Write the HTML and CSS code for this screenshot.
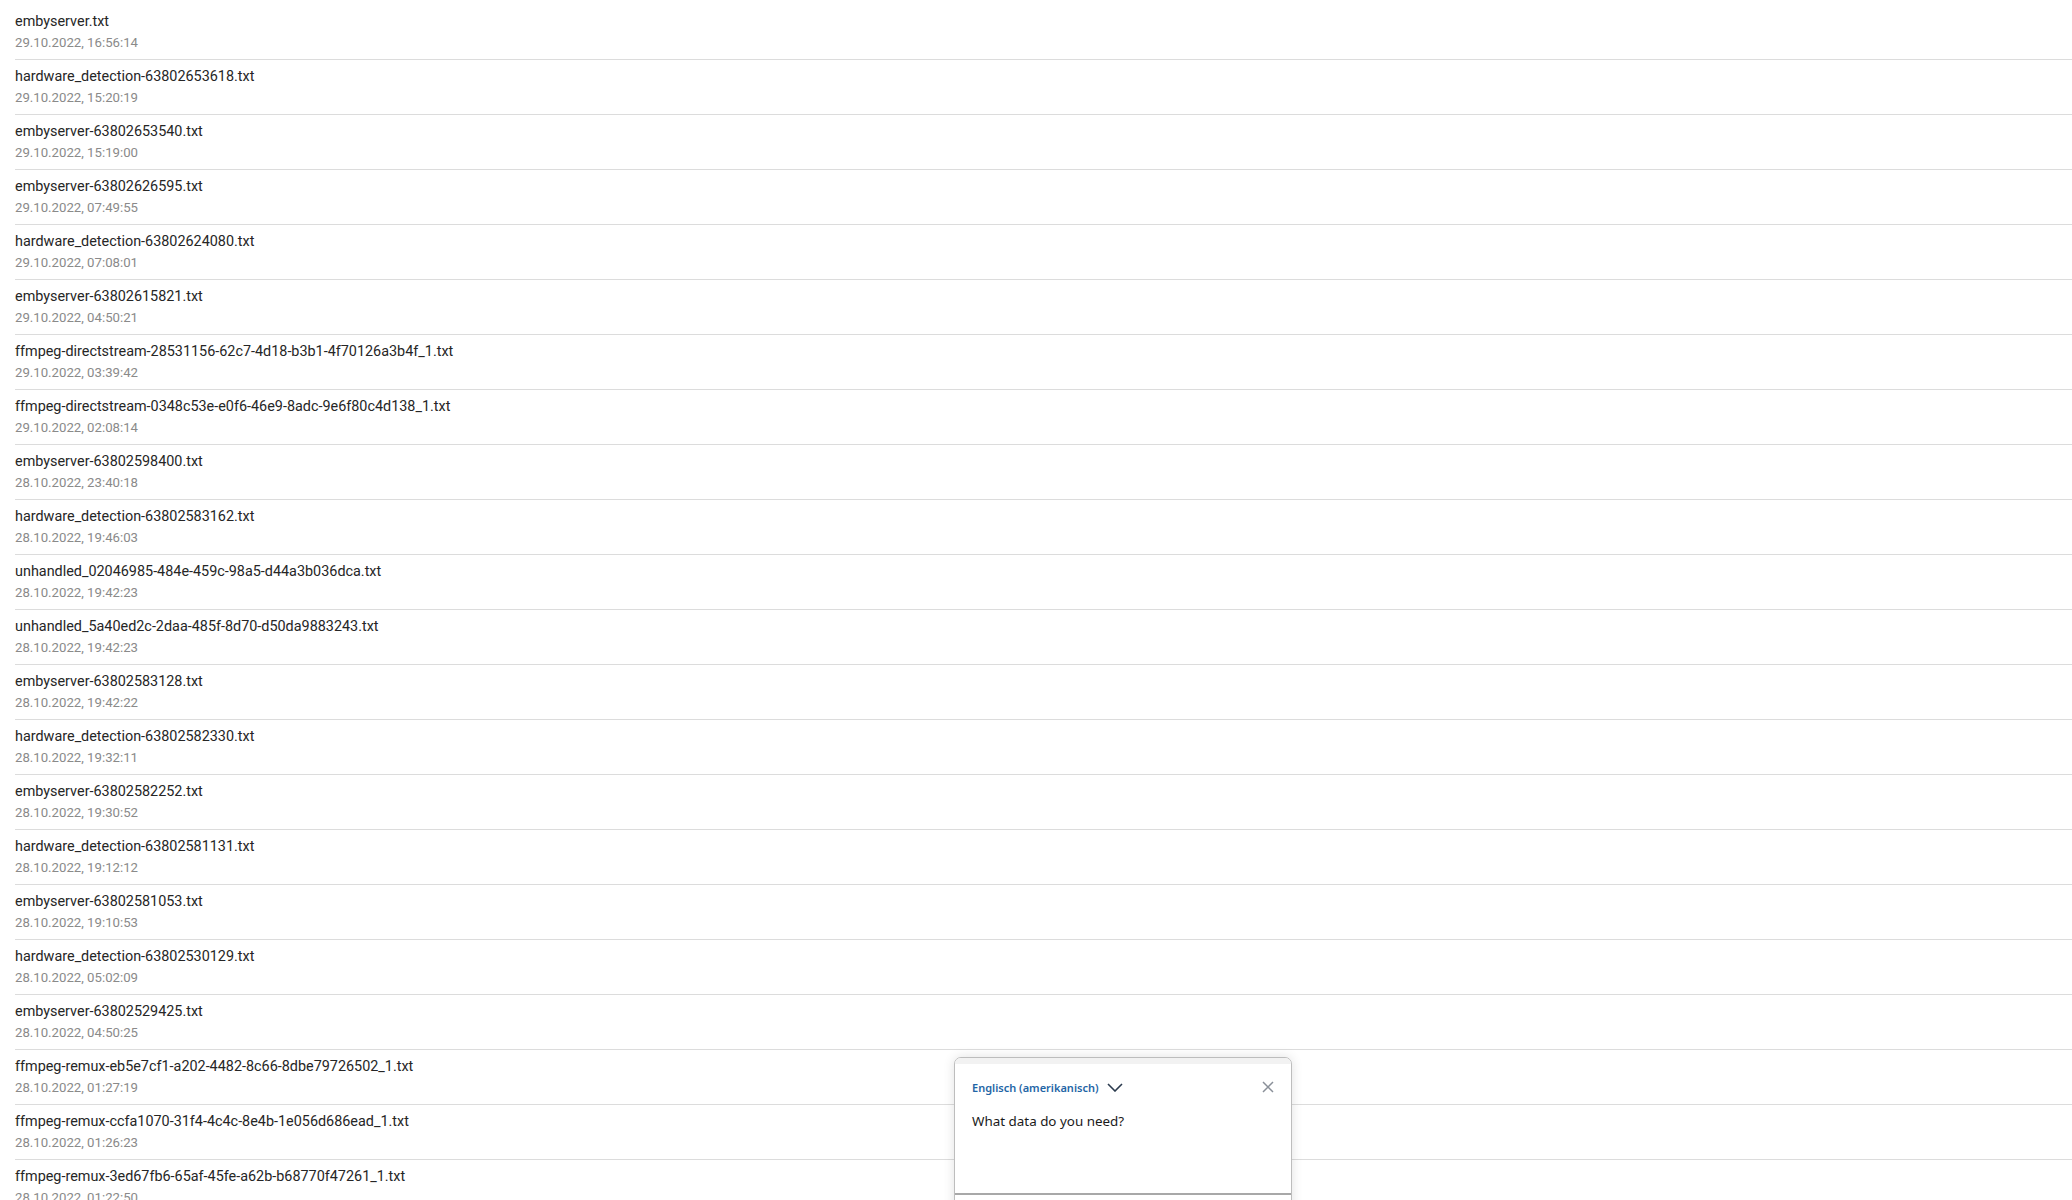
FILE: index.html
```html
<!DOCTYPE html>
<html>
<head>
<meta name="viewport" content="width=device-width, initial-scale=1">
<link rel="stylesheet" href="styles.css">
</head>
<body>

  <!-- log file list -->
  <div class="loglist">
    <div class="logitem"><div class="logname">embyserver.txt</div><div class="logdate">29.10.2022, 16:56:14</div></div>
    <div class="logitem"><div class="logname">hardware_detection-63802653618.txt</div><div class="logdate">29.10.2022, 15:20:19</div></div>
    <div class="logitem"><div class="logname">embyserver-63802653540.txt</div><div class="logdate">29.10.2022, 15:19:00</div></div>
    <div class="logitem"><div class="logname">embyserver-63802626595.txt</div><div class="logdate">29.10.2022, 07:49:55</div></div>
    <div class="logitem"><div class="logname">hardware_detection-63802624080.txt</div><div class="logdate">29.10.2022, 07:08:01</div></div>
    <div class="logitem"><div class="logname">embyserver-63802615821.txt</div><div class="logdate">29.10.2022, 04:50:21</div></div>
    <div class="logitem"><div class="logname">ffmpeg-directstream-28531156-62c7-4d18-b3b1-4f70126a3b4f_1.txt</div><div class="logdate">29.10.2022, 03:39:42</div></div>
    <div class="logitem"><div class="logname">ffmpeg-directstream-0348c53e-e0f6-46e9-8adc-9e6f80c4d138_1.txt</div><div class="logdate">29.10.2022, 02:08:14</div></div>
    <div class="logitem"><div class="logname">embyserver-63802598400.txt</div><div class="logdate">28.10.2022, 23:40:18</div></div>
    <div class="logitem"><div class="logname">hardware_detection-63802583162.txt</div><div class="logdate">28.10.2022, 19:46:03</div></div>
    <div class="logitem"><div class="logname">unhandled_02046985-484e-459c-98a5-d44a3b036dca.txt</div><div class="logdate">28.10.2022, 19:42:23</div></div>
    <div class="logitem"><div class="logname">unhandled_5a40ed2c-2daa-485f-8d70-d50da9883243.txt</div><div class="logdate">28.10.2022, 19:42:23</div></div>
    <div class="logitem"><div class="logname">embyserver-63802583128.txt</div><div class="logdate">28.10.2022, 19:42:22</div></div>
    <div class="logitem"><div class="logname">hardware_detection-63802582330.txt</div><div class="logdate">28.10.2022, 19:32:11</div></div>
    <div class="logitem"><div class="logname">embyserver-63802582252.txt</div><div class="logdate">28.10.2022, 19:30:52</div></div>
    <div class="logitem"><div class="logname">hardware_detection-63802581131.txt</div><div class="logdate">28.10.2022, 19:12:12</div></div>
    <div class="logitem"><div class="logname">embyserver-63802581053.txt</div><div class="logdate">28.10.2022, 19:10:53</div></div>
    <div class="logitem"><div class="logname">hardware_detection-63802530129.txt</div><div class="logdate">28.10.2022, 05:02:09</div></div>
    <div class="logitem"><div class="logname">embyserver-63802529425.txt</div><div class="logdate">28.10.2022, 04:50:25</div></div>
    <div class="logitem"><div class="logname">ffmpeg-remux-eb5e7cf1-a202-4482-8c66-8dbe79726502_1.txt</div><div class="logdate">28.10.2022, 01:27:19</div></div>
    <div class="logitem"><div class="logname">ffmpeg-remux-ccfa1070-31f4-4c4c-8e4b-1e056d686ead_1.txt</div><div class="logdate">28.10.2022, 01:26:23</div></div>
    <div class="logitem"><div class="logname">ffmpeg-remux-3ed67fb6-65af-45fe-a62b-b68770f47261_1.txt</div><div class="logdate">28.10.2022, 01:22:50</div></div>
  </div>

  <!-- translator popup -->
  <div class="popup">
    <div class="popup-top"></div>
    <div class="popup-head">
      <span class="lang">Englisch (amerikanisch)</span>
      <svg class="chevron" width="16" height="9" viewBox="0 0 16 9"><path d="M1 1 L8 8 L15 1" fill="none" stroke="#2b3b4e" stroke-width="1.6"/></svg>
      <svg class="close" width="12" height="12" viewBox="0 0 12 12"><path d="M1 1 L11 11 M11 1 L1 11" fill="none" stroke="#8a9099" stroke-width="1.5"/></svg>
    </div>
    <div class="popup-text">What data do you need?</div>
    <div class="popup-foot"></div>
  </div>

</body>
</html>
```

FILE: styles.css
```css
* {box-sizing: border-box}

html, body {
  margin: 0;
  height: 1200px;
  overflow: hidden;
  background: #fff;
}

body {font-family: Roboto, Arial, sans-serif;}

/* list of log files */
.loglist {
  padding-top: 5px;
  margin-left: 15px;
}

.logitem {
  height: 55px;
  border-bottom: 1px solid #dcdcdc;
  padding-top: 7px;
}

.logname {
  font-size: 14.4px;
  line-height: 20px;
  color: #262626;
}

.logdate {
  font-size: 13.2px;
  line-height: 22px;
  color: #8a8a8a;
}

/* floating translator box */
.popup {
  position: absolute;
  left: 954px;
  top: 1057px;
  width: 338px;
  height: 200px;
  background: #fff;
  border: 1px solid #bdbdbd;
  border-radius: 7px 7px 0 0;
  box-shadow: 0 0 12px rgba(0, 0, 0, 0.12);
  font-family: "Noto Sans", "Open Sans", sans-serif;
}

.popup-top {
  height: 6px;
  background: #f2f2f2;
  border-radius: 6px 6px 0 0;
}

.popup-head {
  display: flex;
  align-items: center;
  padding: 11px 17px 0 17px;
  height: 35px;
}

.lang {
  font-size: 11px;
  font-weight: 600;
  color: #1f66a6;
}

.chevron {
  margin-left: 8px;
}

.close {
  margin-left: auto;
}

.popup-text {
  padding: 12px 17px 0 17px;
  font-size: 13.4px;
  line-height: 20px;
  color: #1a1a1a;
  height: 94px;
}

.popup-foot {
  border-top: 2px solid #a8a8a8;
}
```
